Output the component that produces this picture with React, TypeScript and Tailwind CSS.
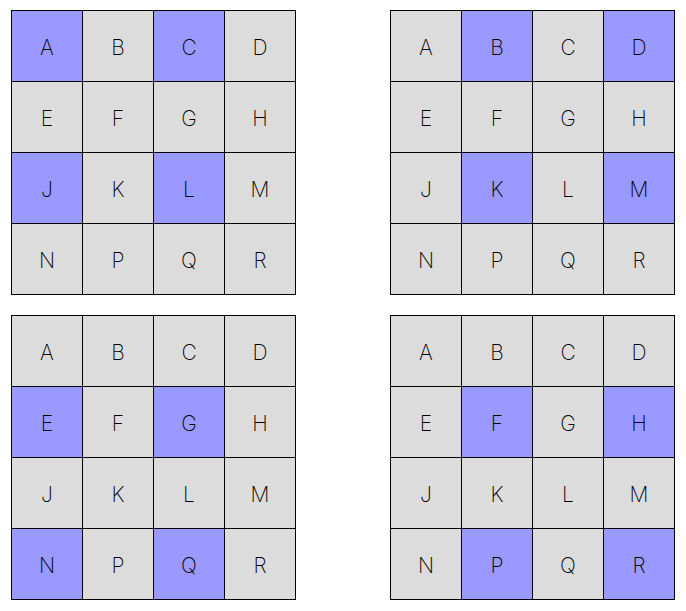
import React from "react";

const letters = ["A","B","C","D","E","F","G","H","J","K","L","M","N","P","Q","R"];
const highlights: string[][] = [
  ["A","C","J","L"],
  ["B","D","K","M"],
  ["E","G","N","Q"],
  ["F","H","P","R"],
];

function Board({ hl }: { hl: string[] }) {
  return (
    <div className="grid grid-cols-[repeat(4,71px)] border-l border-t border-black w-[285px]">
      {letters.map((l) => (
        <div
          key={l}
          className={`h-[71px] border-r border-b border-black flex items-center justify-center text-[21px] text-black font-['Inter',sans-serif] font-extralight ${hl.includes(l) ? "bg-[#9999ff]" : "bg-[#dcdcdc]"}`}
        >
          <span className="leading-none pt-[2px]">{l}</span>
        </div>
      ))}
    </div>
  );
}

export default function App() {
  return (
    <div className="w-[686px] h-[611px] bg-white pt-[10px] pl-[11px]">
      <div className="grid grid-cols-[285px_285px] gap-x-[94px] gap-y-[20px]">
        {highlights.map((h, i) => (
          <Board key={i} hl={h} />
        ))}
      </div>
    </div>
  );
}
